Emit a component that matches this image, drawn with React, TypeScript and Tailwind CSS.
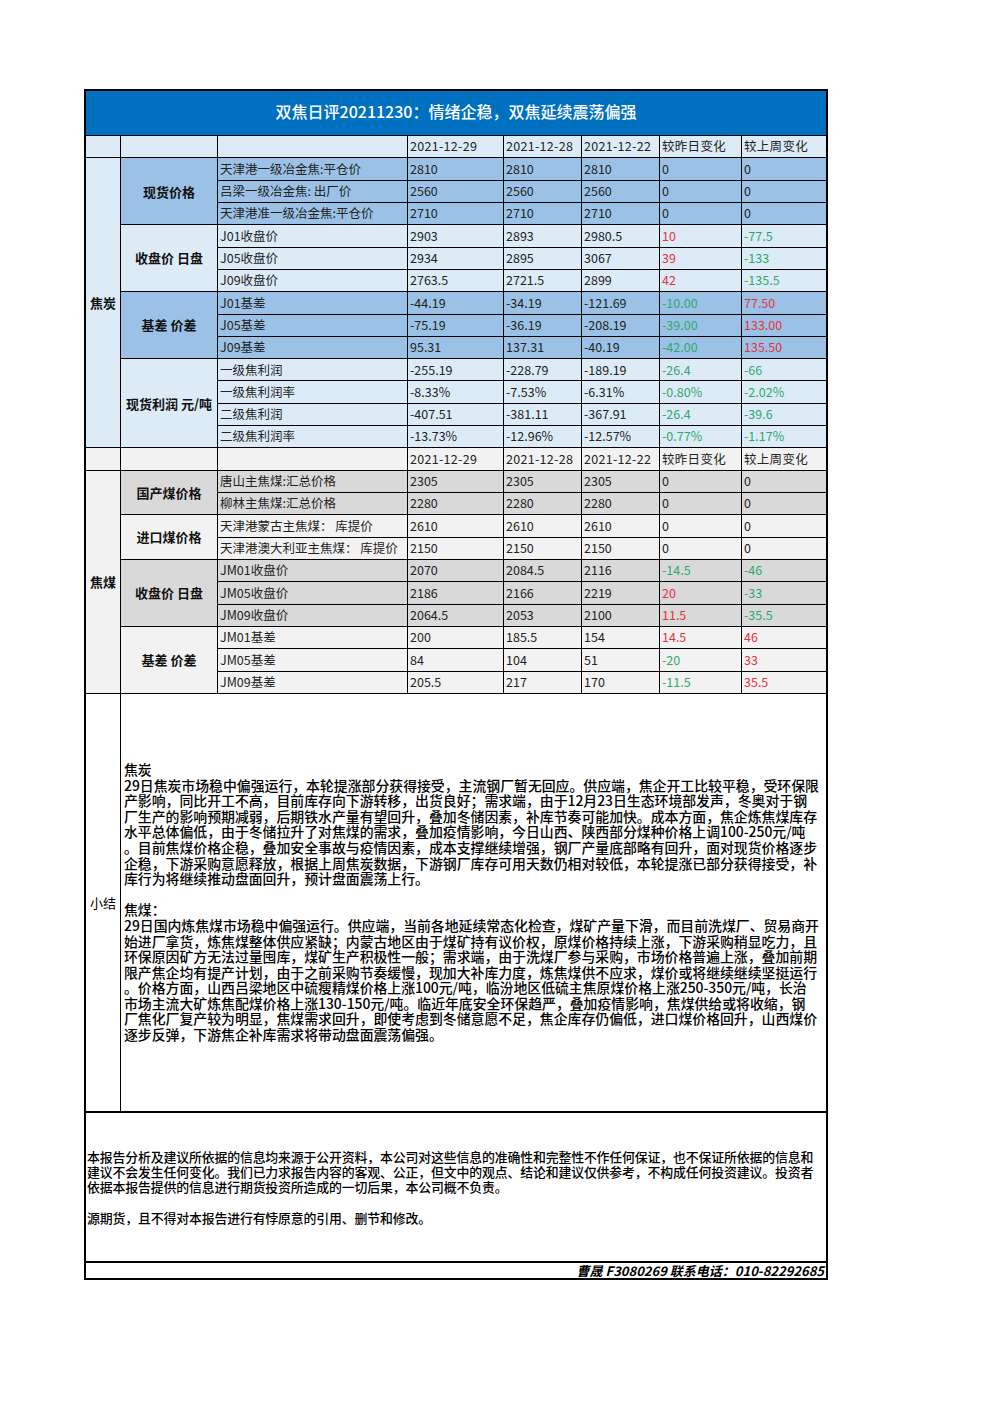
import React from 'react';

type Tone = 'r' | 'g' | '';
type Row = { name: string; v: string[]; c?: [Tone, Tone] };
type Group = { label: string; bg: string; rows: Row[] };

const CELL_FONT = "font-['Noto_Sans_CJK_SC','Noto_Sans',sans-serif]";

const cokeGroups: Group[] = [
  {
    label: '现货价格',
    bg: 'bg-[#9bc2e6]',
    rows: [
      { name: '天津港一级冶金焦:平仓价', v: ['2810', '2810', '2810', '0', '0'] },
      { name: '吕梁一级冶金焦: 出厂价', v: ['2560', '2560', '2560', '0', '0'] },
      { name: '天津港准一级冶金焦:平仓价', v: ['2710', '2710', '2710', '0', '0'] },
    ],
  },
  {
    label: '收盘价 日盘',
    bg: 'bg-[#ddebf7]',
    rows: [
      { name: 'J01收盘价', v: ['2903', '2893', '2980.5', '10', '-77.5'], c: ['r', 'g'] },
      { name: 'J05收盘价', v: ['2934', '2895', '3067', '39', '-133'], c: ['r', 'g'] },
      { name: 'J09收盘价', v: ['2763.5', '2721.5', '2899', '42', '-135.5'], c: ['r', 'g'] },
    ],
  },
  {
    label: '基差 价差',
    bg: 'bg-[#9bc2e6]',
    rows: [
      { name: 'J01基差', v: ['-44.19', '-34.19', '-121.69', '-10.00', '77.50'], c: ['g', 'r'] },
      { name: 'J05基差', v: ['-75.19', '-36.19', '-208.19', '-39.00', '133.00'], c: ['g', 'r'] },
      { name: 'J09基差', v: ['95.31', '137.31', '-40.19', '-42.00', '135.50'], c: ['g', 'r'] },
    ],
  },
  {
    label: '现货利润 元/吨',
    bg: 'bg-[#ddebf7]',
    rows: [
      { name: '一级焦利润', v: ['-255.19', '-228.79', '-189.19', '-26.4', '-66'], c: ['g', 'g'] },
      { name: '一级焦利润率', v: ['-8.33%', '-7.53%', '-6.31%', '-0.80%', '-2.02%'], c: ['g', 'g'] },
      { name: '二级焦利润', v: ['-407.51', '-381.11', '-367.91', '-26.4', '-39.6'], c: ['g', 'g'] },
      { name: '二级焦利润率', v: ['-13.73%', '-12.96%', '-12.57%', '-0.77%', '-1.17%'], c: ['g', 'g'] },
    ],
  },
];

const coalGroups: Group[] = [
  {
    label: '国产煤价格',
    bg: 'bg-[#d9d9d9]',
    rows: [
      { name: '唐山主焦煤:汇总价格', v: ['2305', '2305', '2305', '0', '0'] },
      { name: '柳林主焦煤:汇总价格', v: ['2280', '2280', '2280', '0', '0'] },
    ],
  },
  {
    label: '进口煤价格',
    bg: 'bg-[#f2f2f2]',
    rows: [
      { name: '天津港蒙古主焦煤： 库提价', v: ['2610', '2610', '2610', '0', '0'] },
      { name: '天津港澳大利亚主焦煤： 库提价', v: ['2150', '2150', '2150', '0', '0'] },
    ],
  },
  {
    label: '收盘价 日盘',
    bg: 'bg-[#d9d9d9]',
    rows: [
      { name: 'JM01收盘价', v: ['2070', '2084.5', '2116', '-14.5', '-46'], c: ['g', 'g'] },
      { name: 'JM05收盘价', v: ['2186', '2166', '2219', '20', '-33'], c: ['r', 'g'] },
      { name: 'JM09收盘价', v: ['2064.5', '2053', '2100', '11.5', '-35.5'], c: ['r', 'g'] },
    ],
  },
  {
    label: '基差 价差',
    bg: 'bg-[#f2f2f2]',
    rows: [
      { name: 'JM01基差', v: ['200', '185.5', '154', '14.5', '46'], c: ['r', 'r'] },
      { name: 'JM05基差', v: ['84', '104', '51', '-20', '33'], c: ['g', 'r'] },
      { name: 'JM09基差', v: ['205.5', '217', '170', '-11.5', '35.5'], c: ['g', 'r'] },
    ],
  },
];

const headCols = ['2021-12-29', '2021-12-28', '2021-12-22', '较昨日变化', '较上周变化'];

const cokeText = [
  '焦炭',
  '29日焦炭市场稳中偏强运行，本轮提涨部分获得接受，主流钢厂暂无回应。供应端，焦企开工比较平稳，受环保限',
  '产影响，同比开工不高，目前库存向下游转移，出货良好；需求端，由于12月23日生态环境部发声，冬奥对于钢',
  '厂生产的影响预期减弱，后期铁水产量有望回升，叠加冬储因素，补库节奏可能加快。成本方面，焦企炼焦煤库存',
  '水平总体偏低，由于冬储拉升了对焦煤的需求，叠加疫情影响，今日山西、陕西部分煤种价格上调100-250元/吨',
  '。目前焦煤价格企稳，叠加安全事故与疫情因素，成本支撑继续增强，钢厂产量底部略有回升，面对现货价格逐步',
  '企稳，下游采购意愿释放，根据上周焦炭数据，下游钢厂库存可用天数仍相对较低，本轮提涨已部分获得接受，补',
  '库行为将继续推动盘面回升，预计盘面震荡上行。',
];

const coalText = [
  '焦煤：',
  '29日国内炼焦煤市场稳中偏强运行。供应端，当前各地延续常态化检查，煤矿产量下滑，而目前洗煤厂、贸易商开',
  '始进厂拿货，炼焦煤整体供应紧缺；内蒙古地区由于煤矿持有议价权，原煤价格持续上涨，下游采购稍显吃力，且',
  '环保原因矿方无法过量囤库，煤矿生产积极性一般；需求端，由于洗煤厂参与采购，市场价格普遍上涨，叠加前期',
  '限产焦企均有提产计划，由于之前采购节奏缓慢，现加大补库力度，炼焦煤供不应求，煤价或将继续继续坚挺运行',
  '。价格方面，山西吕梁地区中硫瘦精煤价格上涨100元/吨，临汾地区低硫主焦原煤价格上涨250-350元/吨，长治',
  '市场主流大矿炼焦配煤价格上涨130-150元/吨。临近年底安全环保趋严，叠加疫情影响，焦煤供给或将收缩，钢',
  '厂焦化厂复产较为明显，焦煤需求回升，即使考虑到冬储意愿不足，焦企库存仍偏低，进口煤价格回升，山西煤价',
  '逐步反弹，下游焦企补库需求将带动盘面震荡偏强。',
];

const disclaimer = [
  '本报告分析及建议所依据的信息均来源于公开资料，本公司对这些信息的准确性和完整性不作任何保证，也不保证所依据的信息和',
  '建议不会发生任何变化。我们已力求报告内容的客观、公正，但文中的观点、结论和建议仅供参考，不构成任何投资建议。投资者',
  '依据本报告提供的信息进行期货投资所造成的一切后果，本公司概不负责。',
  '',
  '源期货，且不得对本报告进行有悖原意的引用、删节和修改。',
];

function toneClass(t: Tone) {
  if (t === 'r') return 'text-[#e5323b]';
  if (t === 'g') return 'text-[#2fa86c]';
  return 'text-[#222]';
}

function Cell({
  children,
  bg,
  last,
  className = '',
}: {
  children?: React.ReactNode;
  bg: string;
  last?: boolean;
  className?: string;
}) {
  return (
    <div
      className={`${bg} border-b border-black ${last ? '' : 'border-r'} flex items-center overflow-hidden whitespace-nowrap pl-[2px] text-[12.5px] leading-none ${className}`}
    >
      {children}
    </div>
  );
}

function HeaderRow({ bg }: { bg: string }) {
  return (
    <>
      <Cell bg={bg} />
      <Cell bg={bg} />
      <Cell bg={bg} />
      {headCols.map((h, i) => (
        <Cell key={h} bg={bg} last={i === headCols.length - 1} className="tracking-[0.3px] text-[#222]">
          {h}
        </Cell>
      ))}
    </>
  );
}

function GroupRows({ g }: { g: Group }) {
  const span = g.rows.length === 2 ? 'row-span-2' : g.rows.length === 3 ? 'row-span-3' : 'row-span-4';
  return (
    <>
      <div
        className={`${g.bg} ${span} border-b border-r border-black flex items-center justify-center text-[13px] font-bold text-[#111] whitespace-nowrap`}
      >
        {g.label}
      </div>
      {g.rows.map((r) => (
        <React.Fragment key={r.name}>
          <Cell bg={g.bg} className="text-[#222]">{r.name}</Cell>
          {r.v.map((val, i) => (
            <Cell
              key={i}
              bg={g.bg}
              last={i === 4}
              className={i < 3 ? 'text-[#222]' : toneClass(r.c ? r.c[i - 3] : '')}
            >
              {val}
            </Cell>
          ))}
        </React.Fragment>
      ))}
    </>
  );
}

export default function App() {
  return (
    <div className="min-h-[1403px] w-[992px] bg-white pt-[89px] pl-[84px]">
      <div className={`w-[744px] border-2 border-black ${CELL_FONT}`}>
        <div className="h-[45px] bg-[#0070c0] border-b border-black flex items-center justify-center pb-[4px] text-white text-[16px] font-medium">
          双焦日评20211230：情绪企稳，双焦延续震荡偏强
        </div>

        <div className="grid grid-cols-[35px_97px_190px_96px_78px_78px_82px_84px] grid-rows-[repeat(25,22.32px)]">
          <HeaderRow bg="bg-[#ddebf7]" />
          <div className="row-span-13 bg-[#ddebf7] border-b border-r border-black flex items-center justify-center text-[13px] font-bold text-[#111]">
            焦炭
          </div>
          {cokeGroups.map((g) => (
            <GroupRows key={g.label + g.bg} g={g} />
          ))}

          <HeaderRow bg="bg-[#f2f2f2]" />
          <div className="row-span-10 bg-[#f2f2f2] border-b border-r border-black flex items-center justify-center text-[13px] font-bold text-[#111]">
            焦煤
          </div>
          {coalGroups.map((g) => (
            <GroupRows key={g.label + g.bg} g={g} />
          ))}
        </div>

        <div className="flex h-[419px] border-b-2 border-black">
          <div className="w-[35px] shrink-0 border-r border-black flex items-center justify-center text-[13px] text-black">
            小结
          </div>
          <div className="flex-1 flex flex-col justify-center pl-[3px] text-[13.9px] leading-[15.6px] tracking-[-0.03px] text-black font-medium whitespace-nowrap">
            {cokeText.map((l, i) => (
              <div key={'c' + i} className="h-[15.6px]">{l}</div>
            ))}
            <div className="h-[15.6px]" />
            {coalText.map((l, i) => (
              <div key={'m' + i} className="h-[15.6px]">{l}</div>
            ))}
          </div>
        </div>

        <div className="h-[150px] border-b-2 border-black flex flex-col justify-center pl-[1px] text-[12.9px] leading-[15.3px] tracking-[-0.15px] text-black font-medium whitespace-nowrap">
          {disclaimer.map((l, i) => (
            <div key={i} className="h-[15.3px]">
              {l}
            </div>
          ))}
        </div>

        <div className="h-[15px] flex items-center justify-end pr-[2px] text-[13px] italic font-bold text-black leading-none">
          曹晟 F3080269 联系电话：010-82292685
        </div>
      </div>
    </div>
  );
}
